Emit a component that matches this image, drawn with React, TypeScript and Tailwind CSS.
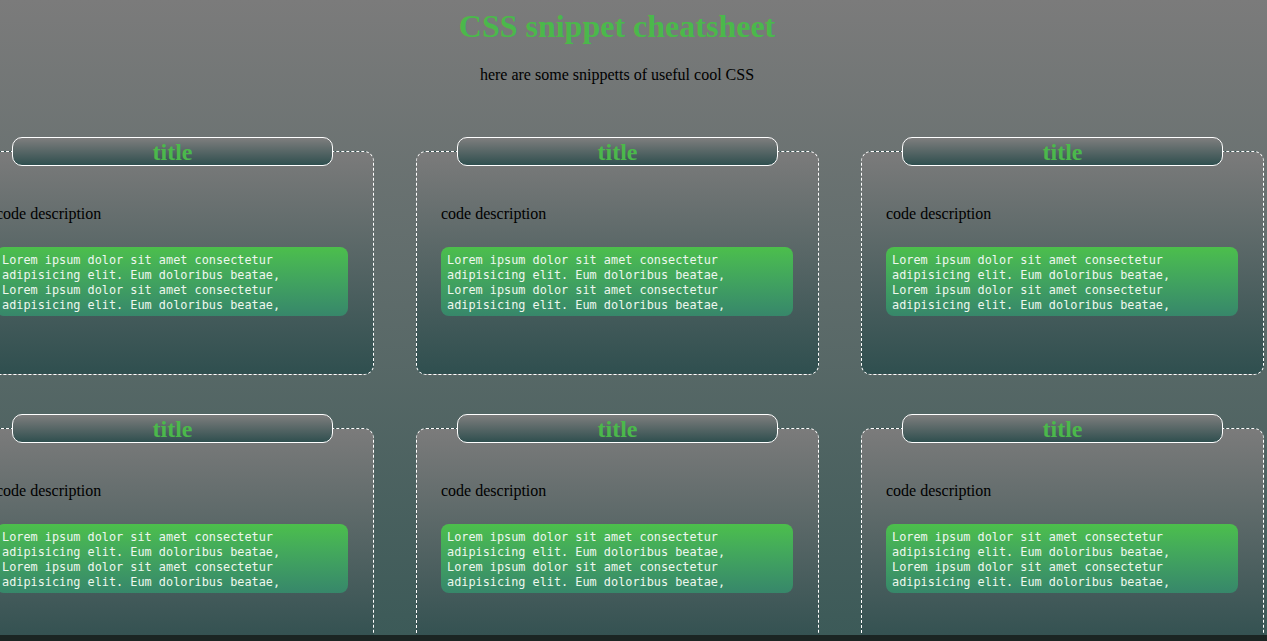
const cards = [1, 2, 3, 4, 5, 6];

function Card() {
  return (
    <div className="h-[224px] rounded-[10px] border border-dashed border-white bg-gradient-to-b from-[#7b7b7b] to-[#2f4f4f] flex flex-col">
      <div className="mx-auto -mt-[15px] w-[321px] h-[29px] rounded-[10px] border border-white bg-gradient-to-b from-[#7e7e7e] to-[#2f4f4f] flex items-center justify-center">
        <span className="text-[24px] leading-[26px] font-bold text-[#4bb84b] [font-family:'Liberation_Serif',serif]">title</span>
      </div>
      <p className="mt-[39px] ml-[24px] text-[16px] leading-[18px] text-black [font-family:'Liberation_Serif',serif]">
        code description
      </p>
      <div className="mt-[24px] ml-[24px] w-[352px] h-[69px] rounded-[8px] bg-gradient-to-b from-[#4cbf4b] to-[#37876a] pt-[6px] pl-[6px]">
        <pre className="text-[11.85px] leading-[15px] text-[#eef7ee] [font-family:'DejaVu_Sans_Mono',monospace]">
          {'Lorem ipsum dolor sit amet consectetur\nadipisicing elit. Eum doloribus beatae,\nLorem ipsum dolor sit amet consectetur\nadipisicing elit. Eum doloribus beatae,'}
        </pre>
      </div>
    </div>
  );
}

export default function App() {
  return (
    <div className="h-[641px] overflow-hidden flex flex-col">
      <div className="h-[635px] overflow-hidden bg-gradient-to-b from-[#7b7b7b] to-[#3c5a58]">
        <div className="-ml-[29px] w-[1292px]">
          <h1 className="mt-[8px] text-center text-[32px] leading-[37px] font-bold text-[#4bb84b] [font-family:'Liberation_Serif',serif]">
            CSS snippet cheatsheet
          </h1>
          <p className="mt-[21px] text-center text-[16px] leading-[18px] text-black [font-family:'Liberation_Serif',serif]">
            here are some snippetts of useful cool CSS
          </p>
          <div className="mt-[67px] grid grid-cols-[repeat(3,403px)] gap-x-[42px] gap-y-[53px]">
            {cards.map((c) => (
              <Card key={c} />
            ))}
          </div>
        </div>
      </div>
      <div className="h-[6px] bg-[#1b2523]" />
    </div>
  );
}
